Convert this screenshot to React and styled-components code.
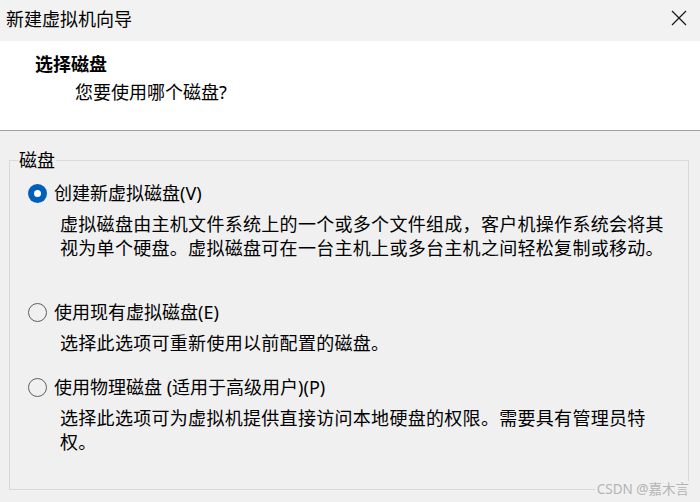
import React from "react";
import styled, { createGlobalStyle } from "styled-components";

const GlobalStyle = createGlobalStyle`
  html, body {
    margin: 0;
    padding: 0;
    background: #f0f0f0;
  }
  * { box-sizing: border-box; }
`;

const FONT = `"Segoe UI", "Noto Sans", "Noto Sans CJK SC", sans-serif`;

const Window = styled.div`
  position: relative;
  width: 700px;
  height: 502px;
  display: flex;
  flex-direction: column;
  font-family: ${FONT};
  color: #000;
  background: #f0f0f0;
  overflow: hidden;
`;

const TitleBar = styled.div`
  height: 41px;
  flex: none;
  display: flex;
  align-items: center;
  justify-content: space-between;
  padding: 0 13px 3px 6px;
  background: #f2f2f2;
`;

const TitleText = styled.div`
  font-size: 18px;
  line-height: 24px;
`;

const CloseButton = styled.div`
  width: 16px;
  height: 16px;
  display: flex;
  align-items: center;
  justify-content: center;
  margin-top: -2px;
`;

const Header = styled.div`
  height: 90px;
  flex: none;
  background: #ffffff;
  border-bottom: 1px solid #a0a0a0;
  padding: 11px 0 0 35px;
  display: flex;
  flex-direction: column;
`;

const HeaderTitle = styled.div`
  font-size: 18px;
  font-weight: 700;
  line-height: 24px;
`;

const HeaderSubtitle = styled.div`
  font-size: 18px;
  line-height: 24px;
  margin-top: 4px;
  padding-left: 40px;
`;

const Body = styled.div`
  flex: 1;
  display: flex;
  flex-direction: column;
  padding: 19px 11px 12px 9px;
`;

const GroupBox = styled.fieldset`
  flex: 1;
  margin: 0;
  padding: 0;
  min-width: 0;
  border: 1px solid #d9d9d9;
`;

const Legend = styled.legend`
  font-size: 18px;
  line-height: 20px;
  padding: 0 1px;
  margin-left: 8px;
`;

const Options = styled.div`
  display: flex;
  flex-direction: column;
  padding: 11px 0 0 18px;
`;

const Option = styled.div`
  display: flex;
  flex-direction: column;
  margin-top: ${(p) => p.$gap}px;
`;

const OptionLabel = styled.label`
  display: flex;
  align-items: center;
  gap: 7px;
  font-size: 18px;
  line-height: 24px;
`;

const Radio = styled.span`
  width: 19px;
  height: 19px;
  flex: none;
  border-radius: 50%;
  display: flex;
  align-items: center;
  justify-content: center;
  background: ${(p) => (p.$checked ? "#005fb8" : "transparent")};
  border: ${(p) => (p.$checked ? "none" : "1.5px solid #5f5f5f")};
  &::after {
    content: "";
    display: ${(p) => (p.$checked ? "block" : "none")};
    width: 7px;
    height: 7px;
    border-radius: 50%;
    background: #ffffff;
  }
`;

const Description = styled.div`
  margin-top: 7px;
  padding-left: 32px;
  font-size: 18px;
  line-height: 24px;
  letter-spacing: 0.3px;
  white-space: nowrap;
`;

const Watermark = styled.div`
  position: absolute;
  right: 11px;
  bottom: 5px;
  padding-left: 2px;
  font-size: 13.5px;
  line-height: 16px;
  color: #b4b4b4;
  background: #f0f0f0;
  font-family: "Noto Sans", "Noto Sans CJK SC", sans-serif;
`;

const options = [
  {
    label: "创建新虚拟磁盘(V)",
    checked: true,
    gap: 0,
    lines: [
      "虚拟磁盘由主机文件系统上的一个或多个文件组成，客户机操作系统会将其",
      "视为单个硬盘。虚拟磁盘可在一台主机上或多台主机之间轻松复制或移动。",
    ],
  },
  {
    label: "使用现有虚拟磁盘(E)",
    checked: false,
    gap: 40,
    lines: ["选择此选项可重新使用以前配置的磁盘。"],
  },
  {
    label: "使用物理磁盘 (适用于高级用户)(P)",
    checked: false,
    gap: 20,
    lines: [
      "选择此选项可为虚拟机提供直接访问本地硬盘的权限。需要具有管理员特",
      "权。",
    ],
  },
];

export default function App() {
  return (
    <>
      <GlobalStyle />
      <Window>
        <TitleBar>
          <TitleText>新建虚拟机向导</TitleText>
          <CloseButton>
            <svg width="16" height="16" viewBox="0 0 16 16">
              <path d="M1 1 L15 15 M15 1 L1 15" stroke="#1b1b1b" strokeWidth="1.3" fill="none" />
            </svg>
          </CloseButton>
        </TitleBar>
        <Header>
          <HeaderTitle>选择磁盘</HeaderTitle>
          <HeaderSubtitle>您要使用哪个磁盘?</HeaderSubtitle>
        </Header>
        <Body>
          <GroupBox>
            <Legend>磁盘</Legend>
            <Options>
              {options.map((o) => (
                <Option key={o.label} $gap={o.gap}>
                  <OptionLabel>
                    <Radio $checked={o.checked} />
                    {o.label}
                  </OptionLabel>
                  <Description>
                    {o.lines.map((l, i) => (
                      <div key={i}>{l}</div>
                    ))}
                  </Description>
                </Option>
              ))}
            </Options>
          </GroupBox>
        </Body>
        <Watermark>CSDN @嘉木言</Watermark>
      </Window>
    </>
  );
}
